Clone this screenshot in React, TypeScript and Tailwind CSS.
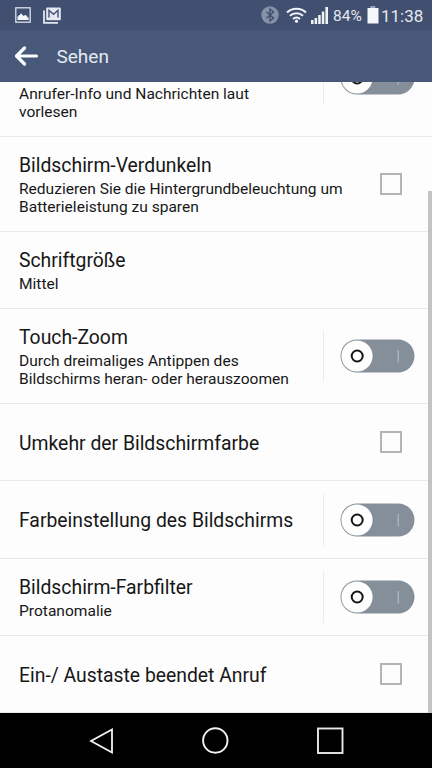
import React from "react";

type Control = "none" | "checkbox" | "toggle";

function Toggle() {
  return (
    <svg className="block h-[34px] w-[75px] shrink-0" viewBox="0 0 75 34">
      <rect x="0.5" y="0.5" width="74" height="33" rx="16.5" fill="#848f99" />
      <circle cx="17" cy="17" r="15.6" fill="#fefefe" />
      <circle cx="17.2" cy="17" r="5.5" fill="none" stroke="#161616" strokeWidth="2" />
      <path d="M58.3 11v12.5" stroke="#a9b3bb" strokeWidth="1.5" />
    </svg>
  );
}

interface RowProps {
  title: string;
  lines?: string[];
  control: Control;
  height: string;
}

function Row({ title, lines = [], control, height }: RowProps) {
  return (
    <div className={`flex shrink-0 items-center border-b border-[#e9e9e9] pl-[19px] ${height}`}>
      <div className="flex min-w-0 flex-1 flex-col whitespace-nowrap text-[#171717]">
        <div className={`text-[19.35px] leading-6 ${lines.length > 0 ? "pt-[2px]" : "pt-[3px]"}`}>{title}</div>
        {lines.length > 0 && (
          <div className="pt-[2px] pb-px text-[15.55px] leading-[18px]">
            {lines.map((line) => (
              <div key={line}>{line}</div>
            ))}
          </div>
        )}
      </div>
      {control === "checkbox" && (
        <div className="mr-[30px] size-[22px] shrink-0 border-2 border-[#b4b4b4]" />
      )}
      {control === "toggle" && (
        <div className="mr-[17px] flex h-[52px] shrink-0 items-center border-l border-[#ececec] pl-[16px]">
          <Toggle />
        </div>
      )}
    </div>
  );
}

function StatusBar() {
  return (
    <div className="flex h-[30px] shrink-0 items-center bg-[#414f70] text-[#e4e8f1]">
      <svg className="ml-[15px] size-4" viewBox="0 0 16 16">
        <rect x="0.8" y="0.8" width="14.4" height="14.4" fill="none" stroke="#dde2ec" strokeWidth="1.3" />
        <path d="M2.5 12.9V9.2h1.2V8h1.5V6.8H7V8h1.2v1h1.2V8h1.8v1.2h1.2v1.2h1.2v2.5z" fill="#f2f4f8" />
      </svg>
      <svg className="ml-[12px] h-[17px] w-[18px]" viewBox="0 0 18 17">
        <path d="M1 3.5V15.8h14" fill="none" stroke="#e4e8f1" strokeWidth="1.8" />
        <rect x="3.2" y="0.5" width="14.6" height="12.8" rx="1" fill="#e4e8f1" />
        <path d="M6 10.6V3.2l4.5 4 4.5-4v7.4" fill="none" stroke="#414f70" strokeWidth="1.4" />
      </svg>
      <svg className="ml-[200px] size-[18px]" viewBox="0 0 18 18">
        <circle cx="9" cy="9" r="8.7" fill="#8791a8" />
        <path d="M5.5 5.8l7 6.3L9 15V3l3.5 2.9-7 6.3" fill="none" stroke="#414f70" strokeWidth="1.4" />
      </svg>
      <svg className="ml-[7px] h-[16px] w-[21px]" viewBox="0 0 21 16">
        <g fill="none" stroke="#f0f3f8" strokeWidth="2.1">
          <path d="M1 5.4a14 14 0 0 1 19 0" />
          <path d="M4 8.8a9.5 9.5 0 0 1 13 0" />
          <path d="M7 12a5.2 5.2 0 0 1 7 0" />
        </g>
        <circle cx="10.5" cy="14.2" r="1.6" fill="#f0f3f8" />
      </svg>
      <svg className="ml-[4px] h-[17px] w-[17px]" viewBox="0 0 17 17">
        <path d="M0 13h2.5v4H0zM3.6 11h2.5v6H3.6zM7.2 8h2.5v9H7.2zM10.8 4.5h2.5V17h-2.5zM14.4 0h2.6v17h-2.6z" fill="#f0f3f8" />
      </svg>
      <span className="ml-[5px] w-[30px] whitespace-nowrap pt-px text-[15.5px] leading-5">84%</span>
      <svg className="ml-[4px] h-[18px] w-[12px]" viewBox="0 0 12 18">
        <path d="M3.3 0h5v2h-5z" fill="#9aa3b6" />
        <path d="M0.5 2h11v15.5H.5z" fill="#f4f6fa" />
      </svg>
      <span className="ml-[2px] whitespace-nowrap pt-px text-[17px] leading-5">11:38</span>
    </div>
  );
}

export default function App() {
  return (
    <div className="flex h-[768px] w-[432px] flex-col overflow-hidden bg-[#fdfdfd] font-['Roboto',sans-serif]">
      <StatusBar />
      <header className="flex h-[52px] shrink-0 items-center bg-[#475879]">
        <svg className="ml-[14px] h-[20px] w-[25px]" viewBox="0 0 25 20">
          <path d="M10.5 2L2.5 10l8 8M3 10h19.5" fill="none" stroke="#fafbfd" strokeWidth="3.2" strokeLinecap="round" strokeLinejoin="round" />
        </svg>
        <h1 className="ml-[17.5px] pt-[2px] text-[19px] leading-6 text-[#e5e9f2]">Sehen</h1>
      </header>

      <main className="relative flex h-[631px] shrink-0 flex-col overflow-hidden">
        <div className="flex h-[55px] shrink-0 items-start overflow-hidden border-b border-[#e9e9e9] pl-[19px]">
          <div className="flex-1 whitespace-nowrap pt-[3px] text-[15.55px] leading-[18px] text-[#171717]">
            <div>Anrufer-Info und Nachrichten laut</div>
            <div>vorlesen</div>
          </div>
          <div className="mr-[17px] flex h-[22px] items-end border-l border-[#ececec] pl-[16px]">
            <div className="flex h-[22px] flex-col justify-end pb-[9.5px]">
              <Toggle />
            </div>
          </div>
        </div>
        <Row
          height="h-[95px]"
          title="Bildschirm-Verdunkeln"
          lines={["Reduzieren Sie die Hintergrundbeleuchtung um", "Batterieleistung zu sparen"]}
          control="checkbox"
        />
        <Row height="h-[77px]" title="Schriftgröße" lines={["Mittel"]} control="none" />
        <Row
          height="h-[95px]"
          title="Touch-Zoom"
          lines={["Durch dreimaliges Antippen des", "Bildschirms heran- oder herauszoomen"]}
          control="toggle"
        />
        <Row height="h-[77px]" title="Umkehr der Bildschirmfarbe" control="checkbox" />
        <Row height="h-[78px]" title="Farbeinstellung des Bildschirms" control="toggle" />
        <Row height="h-[77px]" title="Bildschirm-Farbfilter" lines={["Protanomalie"]} control="toggle" />
        <Row height="h-[77px]" title="Ein-/ Austaste beendet Anruf" control="checkbox" />
        <div className="absolute right-0 top-[109px] h-[522px] w-[4px] bg-[#c4c4c4]" />
      </main>

      <nav className="flex h-[55px] shrink-0 items-center bg-black">
        <svg className="ml-[89px] h-[28px] w-[25px]" viewBox="0 0 25 28">
          <path d="M23 2.5v23L2 14z" fill="none" stroke="#f2f2f2" strokeWidth="1.8" />
        </svg>
        <svg className="ml-[88px] size-[27px]" viewBox="0 0 27 27">
          <circle cx="13.3" cy="13.5" r="12.2" fill="none" stroke="#f2f2f2" strokeWidth="1.9" />
        </svg>
        <svg className="ml-[88px] size-[27px]" viewBox="0 0 27 27">
          <rect x="1" y="1.5" width="24.5" height="24.5" fill="none" stroke="#e6e9e8" strokeWidth="1.9" />
        </svg>
      </nav>
    </div>
  );
}
